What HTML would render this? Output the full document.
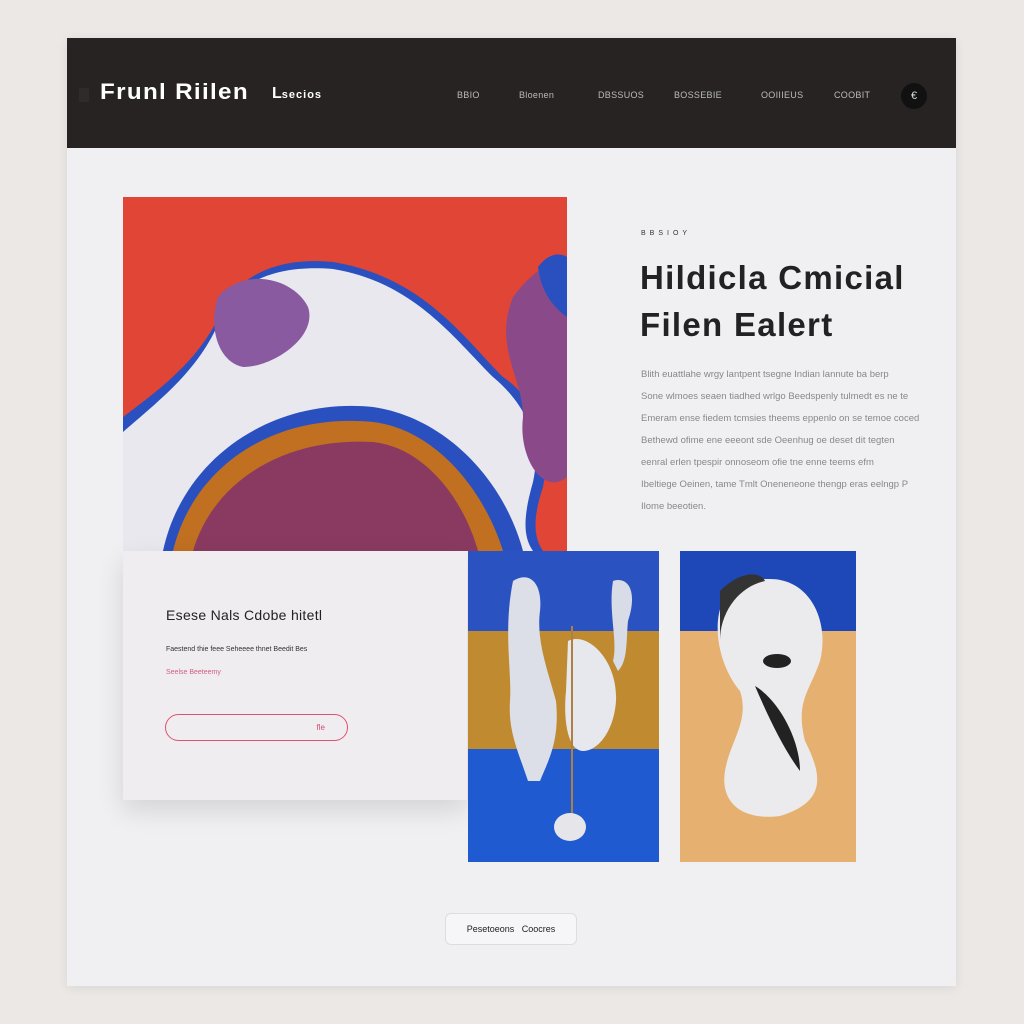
<!DOCTYPE html>
<html><head><style>
*{margin:0;padding:0;box-sizing:border-box}
body{width:1024px;height:1024px;background:#ebe8e6;font-family:"Liberation Sans",sans-serif;position:relative;overflow:hidden}
.card{position:absolute;left:67px;top:38px;width:889px;height:948px;background:#f0f0f3;box-shadow:0 2px 10px rgba(0,0,0,.08)}
.hdr{position:absolute;left:0;top:0;width:889px;height:110px;background:#262322}
.abs{position:absolute}
.nav{position:absolute;top:52px;color:#bbb;font-size:9px;letter-spacing:.3px}
.p{position:absolute;left:574px;font-size:9.5px;color:#888;white-space:nowrap;letter-spacing:0}
</style></head><body>
<div class="card">
<div class="hdr">
<div class="abs" style="left:12px;top:50px;width:10px;height:14px;background:#2e2b2a"></div>
<div class="abs" style="left:33px;top:41px;color:#fff;font-size:22px;font-weight:bold;letter-spacing:1.2px;transform:scaleX(1.1);transform-origin:left">Frunl Riilen</div>
<div class="abs" style="left:205px;top:47px;color:#fff;font-size:16px;font-weight:bold">L<span style="font-size:11px;letter-spacing:1px">secios</span></div>
<div class="nav" style="left:390px">BBIO</div>
<div class="nav" style="left:452px">Bloenen</div>
<div class="nav" style="left:531px">DBSSUOS</div>
<div class="nav" style="left:607px">BOSSEBIE</div>
<div class="nav" style="left:694px">OOIIIEUS</div>
<div class="nav" style="left:767px">COOBIT</div>
<div class="abs" style="left:834px;top:45px;width:26px;height:26px;border-radius:50%;background:#111;color:#ddd;font-size:11px;text-align:center;line-height:26px">&#8364;</div>
</div>

<svg class="abs" style="left:56px;top:159px" width="444" height="354" viewBox="0 0 444 354">
<rect width="444" height="354" fill="#e04535"/>
<path d="M0 220 C40 190 80 160 100 110 C120 75 160 60 210 65 C300 80 340 140 380 180 C410 200 430 240 420 290 C410 320 410 340 420 354 L0 354Z" fill="#2a50c0"/>
<path d="M0 235 C40 200 80 170 100 115 C120 80 160 68 210 72 C290 85 330 140 370 180 C400 205 420 240 410 285 C400 320 400 340 410 354 L0 354Z" fill="#e8e8ee"/>
<path d="M40 354 C60 260 150 200 250 210 C320 220 380 280 400 354Z" fill="#2a50c0"/>
<path d="M50 354 C70 270 150 215 250 225 C310 232 360 290 380 354Z" fill="#c07020"/>
<path d="M70 354 C90 285 160 240 250 245 C300 250 340 300 355 354Z" fill="#8a3a60"/>
<path d="M95 100 C120 70 170 80 185 110 C195 140 150 170 120 170 C95 165 85 130 95 100Z" fill="#8a5aa0"/>
<path d="M390 100 C420 60 444 60 444 80 L444 280 C420 300 395 260 400 220 C400 180 370 150 390 100Z" fill="#8a4a8a"/>
<path d="M415 70 C430 50 444 60 444 60 L444 120 C430 110 418 95 415 70Z" fill="#2a50c0"/>
</svg>

<div class="abs" style="left:574px;top:192px;font-size:7px;color:#333;letter-spacing:4px">BBSIOY</div>
<div class="abs" style="left:573px;top:216px;font-size:33px;font-weight:bold;color:#222;line-height:47px;letter-spacing:1.3px">Hildicla Cmicial<br>Filen Ealert</div>
<div class="p" style="top:331px">Blith euattlahe wrgy lantpent tsegne Indian lannute ba berp</div>
<div class="p" style="top:353px">Sone wlmoes seaen tiadhed wrlgo Beedspenly tulmedt es ne te</div>
<div class="p" style="top:375px">Emeram ense fiedem tcmsies theems eppenlo on se temoe coced</div>
<div class="p" style="top:397px">Bethewd ofime ene eeeont sde Oeenhug oe deset dit tegten</div>
<div class="p" style="top:419px">eenral erlen tpespir onnoseom ofie tne enne teems efm</div>
<div class="p" style="top:441px">Ibeltiege Oeinen, tame Tmlt Oneneneone thengp eras eelngp P</div>
<div class="p" style="top:463px">Ilome beeotien.</div>

<div class="abs" style="left:56px;top:513px;width:344px;height:249px;background:#f0edf0;box-shadow:0 10px 25px rgba(0,0,0,.12)">
<div class="abs" style="left:43px;top:56px;font-size:14px;color:#222;letter-spacing:.3px">Esese Nals Cdobe hitetl</div>
<div class="abs" style="left:43px;top:95px;font-size:7px;color:#333">Faestend thie feee Seheeee thnet Beedit Bes</div>
<div class="abs" style="left:43px;top:118px;font-size:7px;color:#d06080">Seelse Beeteemy</div>
<div class="abs" style="left:42px;top:163px;width:183px;height:27px;border:1px solid #e05070;border-radius:14px;font-size:8px;color:#d05070;text-align:right;padding:8px 22px 0 0">fle</div>
</div>

<svg class="abs" style="left:401px;top:513px" width="191" height="311" viewBox="0 0 191 311">
<rect width="191" height="80" fill="#2a52c0"/>
<rect y="80" width="191" height="118" fill="#c08a30"/>
<rect y="198" width="191" height="113" fill="#1f5ad0"/>
<path d="M45 30 C60 20 75 30 72 60 C68 90 80 120 88 150 C92 190 80 210 72 230 L60 230 C50 200 40 180 42 150 C44 120 35 80 45 30Z" fill="#dcdfe8"/>
<path d="M100 90 C120 80 150 110 148 150 C146 180 130 200 115 200 C100 200 95 170 98 140Z" fill="#e6e8ee"/>
<path d="M145 30 C160 25 170 40 160 70 C158 90 160 110 150 120 L145 110 C150 90 140 60 145 30Z" fill="#d8dce6"/>
<rect x="103" y="75" width="2" height="200" fill="#b08040"/>
<ellipse cx="102" cy="276" rx="16" ry="14" fill="#e6e6ea"/>
</svg>

<svg class="abs" style="left:613px;top:513px" width="176" height="311" viewBox="0 0 176 311">
<rect width="176" height="80" fill="#1e48b8"/>
<rect y="80" width="176" height="231" fill="#e6b070"/>
<path d="M90 28 C130 28 150 70 140 110 C130 140 115 150 125 190 C140 220 150 250 100 265 C60 270 40 250 45 220 C50 190 70 170 60 140 C35 110 30 60 50 40 C60 30 75 28 90 28Z" fill="#ebebed"/>
<path d="M40 40 C60 20 80 20 85 30 C60 35 40 60 40 90Z" fill="#333"/>
<ellipse cx="97" cy="110" rx="14" ry="7" fill="#222"/>
<path d="M75 135 C100 150 120 190 120 220 C105 200 90 170 75 135Z" fill="#222"/>
</svg>

<div class="abs" style="left:378px;top:875px;width:132px;height:32px;border:1px solid #ddd;border-radius:6px;background:#f6f6f8;font-size:9px;color:#222;text-align:center;line-height:30px">Pesetoeons &nbsp; Coocres</div>
</div>
</body></html>
